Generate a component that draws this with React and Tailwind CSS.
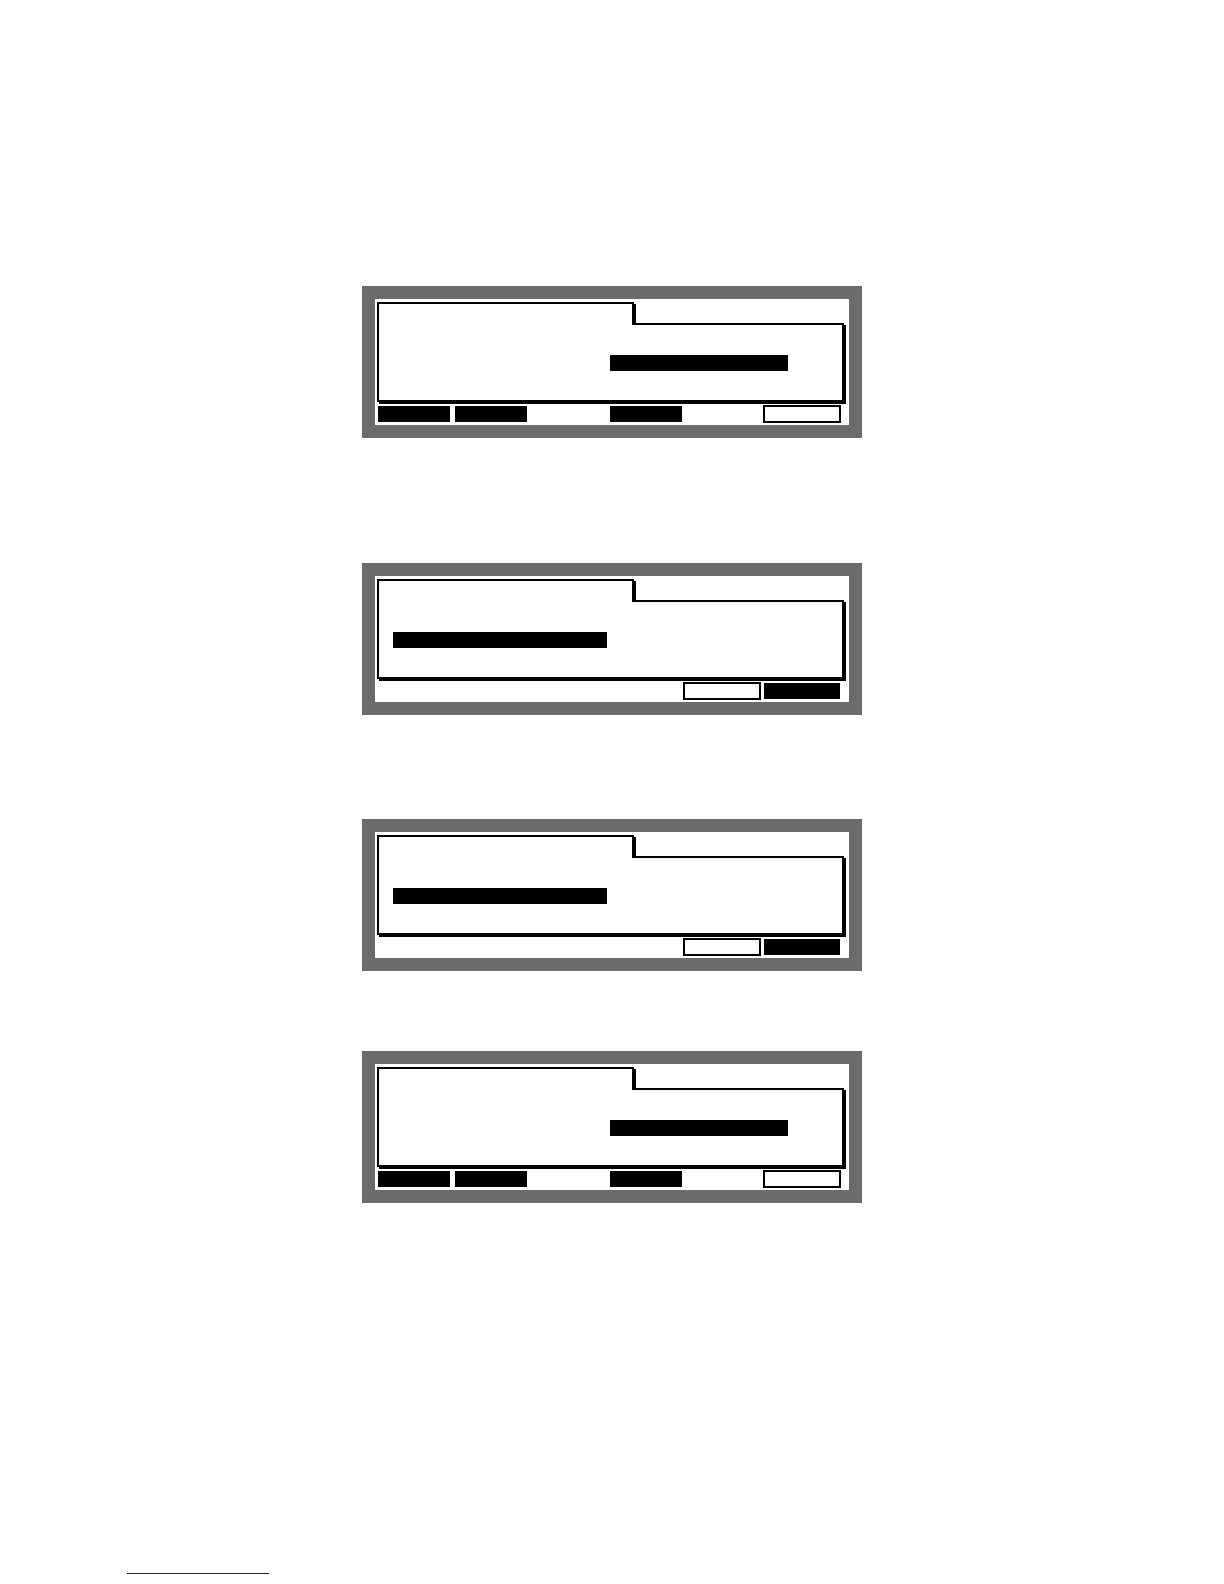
import React from "react";

const panels = [
  { layout: "menu", bar: "right", mt: "mt-0" },
  { layout: "confirm", bar: "left", mt: "mt-[125px]" },
  { layout: "confirm", bar: "left", mt: "mt-[104px]" },
  { layout: "menu", bar: "right", mt: "mt-[80px]" },
];

function Frame({ bar }) {
  return (
    <div className="flex flex-col [filter:drop-shadow(2px_2px_0_#000)]">
      {/* tab */}
      <div className="relative z-10 -mb-[2px] w-[257px] h-[23px] bg-white border-t-2 border-l-2 border-r-2 border-black" />
      {/* body */}
      <div className="w-[467px] h-[79px] bg-white border-2 border-black pt-[30px]">
        {bar === "right" ? (
          <div className="ml-[231px] w-[178px] h-[16px] bg-black" />
        ) : (
          <div className="ml-[14px] w-[214px] h-[16px] bg-black" />
        )}
      </div>
    </div>
  );
}

function Panel({ layout, bar, mt }) {
  return (
    <div className={`${mt} w-[500px] h-[152px] bg-[#6b6b6b] p-[13px]`}>
      <div className="w-full h-full bg-white flex flex-col">
        <div className="pt-[3px] pl-[2px]">
          <Frame bar={bar} />
        </div>

        {layout === "menu" ? (
          <div className="mt-[3px] h-[18px] flex items-center pl-[3px]">
            <div className="w-[72px] h-[16px] bg-black" />
            <div className="ml-[5px] w-[72px] h-[16px] bg-black" />
            <div className="ml-[83px] w-[72px] h-[16px] bg-black" />
            <div className="ml-[81px] w-[78px] h-[18px] border-2 border-black bg-white" />
          </div>
        ) : (
          <div className="mt-[3px] h-[18px] flex items-center justify-end pr-[9px] gap-[3px]">
            <div className="w-[78px] h-[18px] border-2 border-black bg-white" />
            <div className="w-[76px] h-[16px] bg-black" />
          </div>
        )}
      </div>
    </div>
  );
}

export default function App() {
  return (
    <div className="w-[1224px] h-[1584px] bg-white flex flex-col">
      <div className="flex flex-col items-center pt-[286px]">
        {panels.map((p, i) => (
          <Panel key={i} {...p} />
        ))}
      </div>
      <div className="mt-[370px] ml-[127px] w-[142px] h-px bg-[#1a1a8c]" />
    </div>
  );
}
